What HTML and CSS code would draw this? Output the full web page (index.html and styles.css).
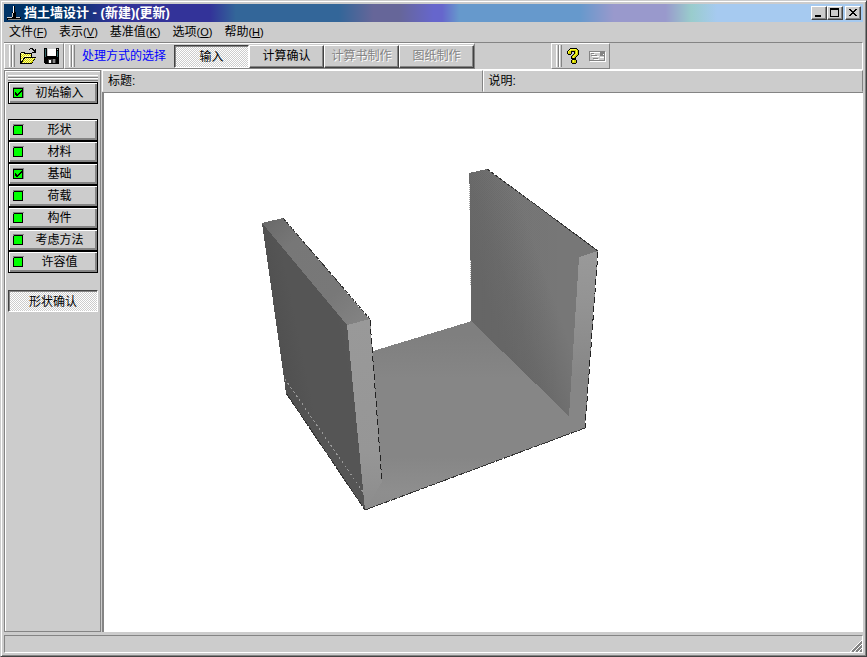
FILE: index.html
```html
<!DOCTYPE html>
<html lang="zh-CN">
<head>
<meta charset="utf-8">
<title>挡土墙设计 - (新建)(更新)</title>
<link rel="stylesheet" href="styles.css">
</head>
<body>
<svg class="symbols" aria-hidden="true">
  <symbol id="lamp" viewBox="0 0 11 11">
    <path d="M0 0h11v11H0z" fill="#848484"/><path d="M1 1h10v10H0v-1h1z" fill="#000"/><path d="M10 1h1v10h-1z" fill="#ccc"/><path d="M9 1h1v10H9z" fill="#000"/><path d="M1 2h8v8H1z" fill="#0f0"/><path d="M0 2h1v9H0z" fill="#000"/>
  </symbol>
  <symbol id="lamp-done" viewBox="0 0 11 11">
    <path d="M0 0h11v11H0z" fill="#848484"/><path d="M0 1h10v10H0z" fill="#000"/><path d="M1 2h8v8H1z" fill="#0f0"/>
    <path d="M2 5h1v1h1v1h1V6h1V5h1V4h1V3h1v2H8v1H7v1H6v1H5v1H3V8H2z" fill="#000"/>
  </symbol>
</svg>
<div class="window">
  <header class="titlebar">
    <svg class="app-icon" width="16" height="16" viewBox="0 0 16 16" shape-rendering="crispEdges" aria-hidden="true">
      <path d="M7 1h2v6h1v5h5v3H1v-3h5V7h1z" fill="#000"/>
      <path d="M7 1h1v7H7z" fill="#fff"/>
      <path d="M6 8h1v4H6z" fill="#ccc"/>
      <path d="M1 12h5v1H1zM10 12h4v1h-4z" fill="#ccc"/>
      <path d="M2 14h13v1H2z" fill="#848484"/>
    </svg>
    <h1>挡土墙设计 - (新建)(更新)</h1>
    <div class="window-controls">
      <button type="button" aria-label="最小化"><svg width="14" height="12" viewBox="0 0 14 12" shape-rendering="crispEdges"><path d="M3 8h6v2H3z"/></svg></button>
      <button type="button" aria-label="最大化"><svg width="14" height="12" viewBox="0 0 14 12" shape-rendering="crispEdges"><path d="M2 1h9v9H2zM3 3v6h7V3z" fill-rule="evenodd"/></svg></button>
      <button type="button" aria-label="关闭" class="close"><svg width="14" height="12" viewBox="0 0 14 12" shape-rendering="crispEdges"><path d="M3 2h2v1h1v1h2V3h1V2h2v1h-1v1H9v1H8v1h1v1h1v1h1v1H9V8H8V7H6v1H5v1H3V8h1V7h1V6h1V5H5V4H4V3H3z"/></svg></button>
    </div>
  </header>
  <nav class="menubar">
    <button type="button">文件<span>(<u>F</u>)</span></button>
    <button type="button">表示<span>(<u>V</u>)</span></button>
    <button type="button">基准值<span>(<u>K</u>)</span></button>
    <button type="button">选项<span>(<u>O</u>)</span></button>
    <button type="button">帮助<span>(<u>H</u>)</span></button>
  </nav>
  <div class="toolbars">
    <div class="band file-band">
      <i class="grip"></i>
      <button type="button" class="tool" aria-label="打开">
        <svg width="17" height="17" viewBox="0 0 17 17" shape-rendering="crispEdges">
          <path d="M0 5h1V4h4v1h7v4h4v1h-1v2h-1v1h-1v2h-1v1H0z" fill="#000"/>
          <path d="M1 5h3v1h7v3H4v1H3v2H2v1H1z" fill="#ff9"/>
          <path d="M5 10h10v1h-1v1h-1v2h-1v1H2v-1h1v-2h1v-1h1z" fill="#cc0"/>
          <path d="M1 6h1v1H1zM3 6h1v1H3zM5 6h1v1H5zM7 6h1v1H7zM9 6h1v1H9zM2 7h1v1H2zM4 7h1v1H4zM6 7h1v1H6zM8 7h1v1H8zM10 7h1v1h-1zM1 8h1v1H1zM3 8h1v1H3zM2 9h1v1H2zM1 10h1v1H1z" fill="#cc0"/>
          <path d="M5 10h1v1H5zM7 10h1v1H7zM9 10h1v1H9zM11 10h1v1h-1zM13 10h1v1h-1zM4 11h1v1H4zM6 11h1v1H6zM8 11h1v1H8zM10 11h1v1h-1zM12 11h1v1h-1zM5 12h1v1H5zM7 12h1v1H7zM9 12h1v1H9zM11 12h1v1h-1zM4 13h1v1H4zM6 13h1v1H6zM8 13h1v1H8zM10 13h1v1h-1zM3 14h1v1H3zM5 14h1v1H5zM7 14h1v1H7zM9 14h1v1H9z" fill="#ff9"/>
          <path d="M9 1h1V0h3v1h1v1h1V1h1v4h-4V4h2V3h-1V2h-1V1h-2v1H9z" fill="#000"/>
        </svg>
      </button>
      <button type="button" class="tool" aria-label="保存">
        <svg width="15" height="17" viewBox="0 0 15 17" shape-rendering="crispEdges">
          <path d="M0 0h15v16H1v-1H0z"/>
          <path d="M3 0h9v8H3z" fill="#ccc"/><path d="M4 1h8v7H4z" fill="#fff"/>
          <path d="M1 1h1v8H1zM13 3h1v6h-1z" fill="#366"/>
          <path d="M13 1h1v1h-1z" fill="#ccc"/>
          <path d="M4 11h8v4H4z" fill="#333"/><path d="M5 12h2v3H5z" fill="#fff"/><path d="M9 11h2v4H9z" fill="#848484"/>
        </svg>
      </button>
    </div>
    <div class="band mode-band">
      <i class="grip"></i>
      <span class="mode-label">处理方式的选择</span>
      <div class="modes">
        <button type="button" class="mode pressed" aria-pressed="true">输入</button>
        <button type="button" class="mode">计算确认</button>
        <button type="button" class="mode" disabled>计算书制作</button>
        <button type="button" class="mode" disabled>图纸制作</button>
      </div>
    </div>
    <div class="band help-band">
      <i class="grip"></i>
      <button type="button" class="tool" aria-label="帮助">
        <svg width="13" height="17" viewBox="0 0 13 17" shape-rendering="crispEdges">
          <path d="M3 0h7v1h1v1h1v5h-1v1h-1v1H9v2H4V8h1V7h1V6h1V4H5v2H4v1H1V6H0V3h1V2h1V1h1zM5 11h4v1h1v3H9v1H5v-1H4v-3h1z"/>
          <path d="M3 1h7v1h1v5h-1v1H9v1H8v1H5V8h1V7h1V6h1V3H4v3H1V3h1V2h1zM5 12h4v3H5z" fill="#cc0"/>
          <path d="M3 1h6v1H3zM2 2h2v1H2zM9 2h1v4H9zM8 6h1v1H8zM7 7h1v1H7zM6 8h1v2H6zM1 3h1v2H1zM6 12h1v2H6z" fill="#ff3"/>
        </svg>
      </button>
      <button type="button" class="tool" aria-label="联系" disabled>
        <svg width="17" height="11" viewBox="0 0 17 11" shape-rendering="crispEdges">
          <path d="M1 1h16v10H1z" fill="#fff"/><path d="M0 0h16v10H0z" fill="#848484"/><path d="M1 1h14v8H1z" fill="#ccc"/>
          <path d="M1 1h10v1H1zM3 3h3v1H3zM3 5h7v1H3zM5 8h5v1H5zM11 6h4v1h-4z" fill="#fff"/>
          <path d="M2 2h3v1H2zM2 4h6v1H2zM4 7h5v1H4zM11 1h4v4h-4z" fill="#848484"/><path d="M14 3h1v1h-1z" fill="#fff"/>
        </svg>
      </button>
    </div>
  </div>
  <div class="workspace">
    <aside class="sidebar">
      <i class="grip-row"></i>
      <button type="button" class="step"><svg class="lamp"><use href="#lamp-done"/></svg><span>初始输入</span></button>
      <div class="steps">
        <button type="button" class="step"><svg class="lamp"><use href="#lamp"/></svg><span>形状</span></button>
        <button type="button" class="step"><svg class="lamp"><use href="#lamp"/></svg><span>材料</span></button>
        <button type="button" class="step"><svg class="lamp"><use href="#lamp-done"/></svg><span>基础</span></button>
        <button type="button" class="step"><svg class="lamp"><use href="#lamp"/></svg><span>荷载</span></button>
        <button type="button" class="step"><svg class="lamp"><use href="#lamp"/></svg><span>构件</span></button>
        <button type="button" class="step"><svg class="lamp"><use href="#lamp"/></svg><span>考虑方法</span></button>
        <button type="button" class="step"><svg class="lamp"><use href="#lamp"/></svg><span>许容值</span></button>
      </div>
      <button type="button" class="confirm pressed" aria-pressed="true">形状确认</button>
    </aside>
    <main class="document">
      <div class="info">
        <div class="field">标题:</div>
        <div class="field">说明:</div>
      </div>
      <div class="view">
        <svg viewBox="104 93 759 538" role="img" aria-label="挡土墙三维形状" shape-rendering="crispEdges">
          <defs>
            <pattern id="dark" width="2" height="2" patternUnits="userSpaceOnUse"><path d="M0 0h1v1H0zM1 1h1v1H1z" fill="#666"/></pattern>
            <linearGradient id="cap" gradientUnits="userSpaceOnUse" x1="265" y1="218" x2="365" y2="325"><stop offset="0" stop-color="#696969"/><stop offset=".25" stop-color="#777"/><stop offset=".7" stop-color="#787878"/><stop offset="1" stop-color="#848484"/></linearGradient>
            <linearGradient id="outer" gradientUnits="userSpaceOnUse" x1="265" y1="320" x2="365" y2="300"><stop offset="0" stop-color="#4f4f4f"/><stop offset=".3" stop-color="#555"/><stop offset=".7" stop-color="#555"/><stop offset="1" stop-color="#5d5d5d"/></linearGradient>
            <linearGradient id="inner" gradientUnits="userSpaceOnUse" x1="470" y1="250" x2="555" y2="220"><stop offset="0" stop-color="#666"/><stop offset=".25" stop-color="#6a6a6a"/><stop offset=".7" stop-color="#777"/><stop offset="1" stop-color="#777"/></linearGradient>
            <linearGradient id="end" gradientUnits="userSpaceOnUse" x1="0" y1="255" x2="0" y2="380"><stop offset="0" stop-color="#999"/><stop offset=".4" stop-color="#939393"/><stop offset="1" stop-color="#868686"/></linearGradient>
            <linearGradient id="front" gradientUnits="userSpaceOnUse" x1="0" y1="320" x2="0" y2="510"><stop offset="0" stop-color="#999"/><stop offset=".7" stop-color="#969696"/><stop offset="1" stop-color="#8c8c8c"/></linearGradient>
            <linearGradient id="floor" gradientUnits="userSpaceOnUse" x1="0" y1="335" x2="0" y2="509"><stop offset="0" stop-color="#7f7f7f"/><stop offset=".25" stop-color="#868686"/><stop offset=".7" stop-color="#868686"/><stop offset=".9" stop-color="#8e8e8e"/><stop offset="1" stop-color="#8c8c8c"/></linearGradient>
            <linearGradient id="fade"><stop offset="0" stop-color="#fff"/><stop offset="1" stop-color="#000"/></linearGradient>
            <mask id="fading"><path d="M469 169h90v250h-90z" fill="url(#fade)"/></mask>
          </defs>
          <path d="M373 351 472 321 569 416 585 428 365 510 375 470z" fill="url(#floor)"/>
          <path d="M469 173 487 169 598 251 584 300 569 416 471 321 470 195z" fill="url(#inner)"/>
          <path d="M469 173 487 169 598 251 569 416 471 321z" fill="url(#dark)" mask="url(#fading)" opacity=".6"/>
          <path d="M579 257 598 251 585 428 569 416z" fill="url(#end)"/>
          <path d="M262 223 347 325 365 510 286 393z" fill="url(#outer)"/>
          <path d="M262 223 283 218 370 320 347 325z" fill="url(#cap)"/>
          <path d="M347 325 370 319 382 482 365 510z" fill="url(#front)"/>
          <path d="M487 169 598 251M283 218 370 319" stroke="#333" stroke-dasharray="4 1" fill="none"/>
          <path d="M598 252 585 428M370 320 382 482" stroke="#222" stroke-dasharray="6 3" fill="none"/>
          <path d="M585 428 365 510 286 393" stroke="#333" stroke-dasharray="7 1" fill="none"/>
          <path d="M285 379 363 492" stroke="#999" stroke-dasharray="2 3" fill="none"/>
        </svg>
      </div>
    </main>
  </div>
  <footer class="statusbar">
    <svg width="12" height="12" viewBox="0 0 12 12" shape-rendering="crispEdges" aria-hidden="true">
      <path d="M0 12 12 0v12z" fill="#ccc"/>
      <path d="M0 12 12 0M4 12l8-8M8 12l4-4" stroke="#fff"/>
      <path d="M2 12 12 2M6 12l6-6M10 12l2-2" stroke="#848484" stroke-width="2"/>
    </svg>
  </footer>
</div>
</body>
</html>
```
FILE: styles.css
```css
* { box-sizing: border-box; }

body {
  margin: 0;
  font: 12px/14px "Liberation Sans", "Noto Sans CJK SC", sans-serif;
  color: #000;
  background: #ccc;
}

button {
  margin: 0;
  padding: 0;
  border: 0;
  font: inherit;
  color: inherit;
  background: #ccc;
  white-space: nowrap;
}

svg { display: block; }

.symbols { display: none; }

.window {
  display: flex;
  flex-direction: column;
  min-height: 100vh;
  padding: 3px;
  border: 1px solid;
  border-color: #ccc #424242 #424242 #ccc;
  box-shadow: inset 1px 1px #fff, inset -1px -1px #848484;
}

.titlebar {
  display: flex;
  align-items: center;
  height: 18px;
  padding: 0 2px;
  color: #fff;
  background: linear-gradient(90deg, #036 7%, #339 13%, #339 24%, #369 27%, #369 39%, #669 43%, #669 46%, #66c 50%, #66c 51%, #69c 53%, #69c 67%, #99c 71%, #99c 77%, #9cc 80%, #a6caf0 83%);
}

.titlebar h1 {
  flex: 1;
  margin: 0 0 0 2px;
  font-size: 13px;
  line-height: 18px;
}

.window-controls { display: flex; }

.window-controls button {
  width: 16px;
  height: 14px;
  border: 1px solid;
  border-color: #fff #424242 #424242 #fff;
  box-shadow: inset -1px -1px #848484;
}

.window-controls .close { margin-left: 2px; }

.menubar {
  display: flex;
  gap: 12px;
  height: 20px;
  padding: 0 5px;
}

.menubar span { font-size: 11px; }

.toolbars {
  display: flex;
  height: 28px;
  border-top: 1px solid #848484;
  border-right: 1px solid #fff;
  border-bottom: 1px solid #fff;
}

.band {
  display: flex;
  align-items: center;
  border: 1px solid;
  border-color: #fff #848484 #848484 #fff;
}

.grip {
  width: 6px;
  height: 22px;
  margin-left: 4px;
  background: linear-gradient(90deg, #fff 1px, #ccc 1px 2px, #848484 2px 3px, #fff 3px 4px, #ccc 4px 5px, #848484 5px);
}

.file-band { width: 60px; }
.file-band .tool { margin-left: 5px; }
.file-band .tool + .tool { margin-left: 7px; }

.mode-label {
  margin-left: 7px;
  color: #00f;
}

.modes {
  display: flex;
  margin-left: 8px;
}

.mode {
  width: 75px;
  height: 23px;
  border: 1px solid;
  border-color: #fff #424242 #424242 #fff;
  box-shadow: inset -1px -1px #848484;
}

.mode:disabled {
  color: #848484;
  text-shadow: 1px 1px #fff;
}

.pressed {
  border: 1px solid;
  border-color: #424242 #fff #fff #424242;
  box-shadow: inset 1px 1px #848484;
  background: repeating-conic-gradient(#fff 0 25%, #ccc 0 50%) 0 0 / 2px 2px;
}

.mode.pressed,
.confirm.pressed { padding: 2px 0 0; }

.help-band {
  width: 59px;
  margin-left: 76px;
}

.help-band .tool { margin-left: 5px; }
.help-band .tool + .tool { margin-left: 9px; }

.workspace {
  display: flex;
  flex: 1;
}

.sidebar {
  display: flex;
  flex-direction: column;
  width: 97px;
  padding: 4px 2px 4px 3px;
  border: 1px solid #848484;
  box-shadow: inset 1px 1px #fff;
}

.grip-row {
  height: 6px;
  margin-bottom: 1px;
  background: linear-gradient(#fff 1px, #ccc 1px 2px, #848484 2px 3px, #fff 3px 4px, #ccc 4px 5px, #848484 5px);
}

.step {
  display: flex;
  align-items: center;
  width: 100%;
  height: 22px;
  padding: 0 2px;
  border: 1px solid #000;
  box-shadow: inset 1px 1px #fff, inset -2px -2px #848484;
}

.step span { flex: 1; }

.steps { margin: 15px 0 17px; }

.lamp {
  width: 11px;
  height: 11px;
  margin: 0 0 1px 2px;
  shape-rendering: crispEdges;
}

.confirm { height: 22px; }

.document {
  display: flex;
  flex: 1;
  flex-direction: column;
  margin-left: 1px;
}

.info {
  display: grid;
  grid-template-columns: 1fr 1fr;
  height: 23px;
  border-bottom: 2px solid #848484;
}

.field {
  padding: 3px 5px;
  border: 1px solid;
  border-color: #fff #848484 #ccc #fff;
}

.view {
  flex: 1;
  border-left: 2px solid #848484;
  background: #fff;
}

.view svg {
  width: 100%;
  height: auto;
}

.statusbar {
  display: flex;
  align-items: flex-end;
  justify-content: flex-end;
  height: 18px;
  margin-top: 3px;
  border: 1px solid;
  border-color: #848484 #fff #fff #848484;
}
```
